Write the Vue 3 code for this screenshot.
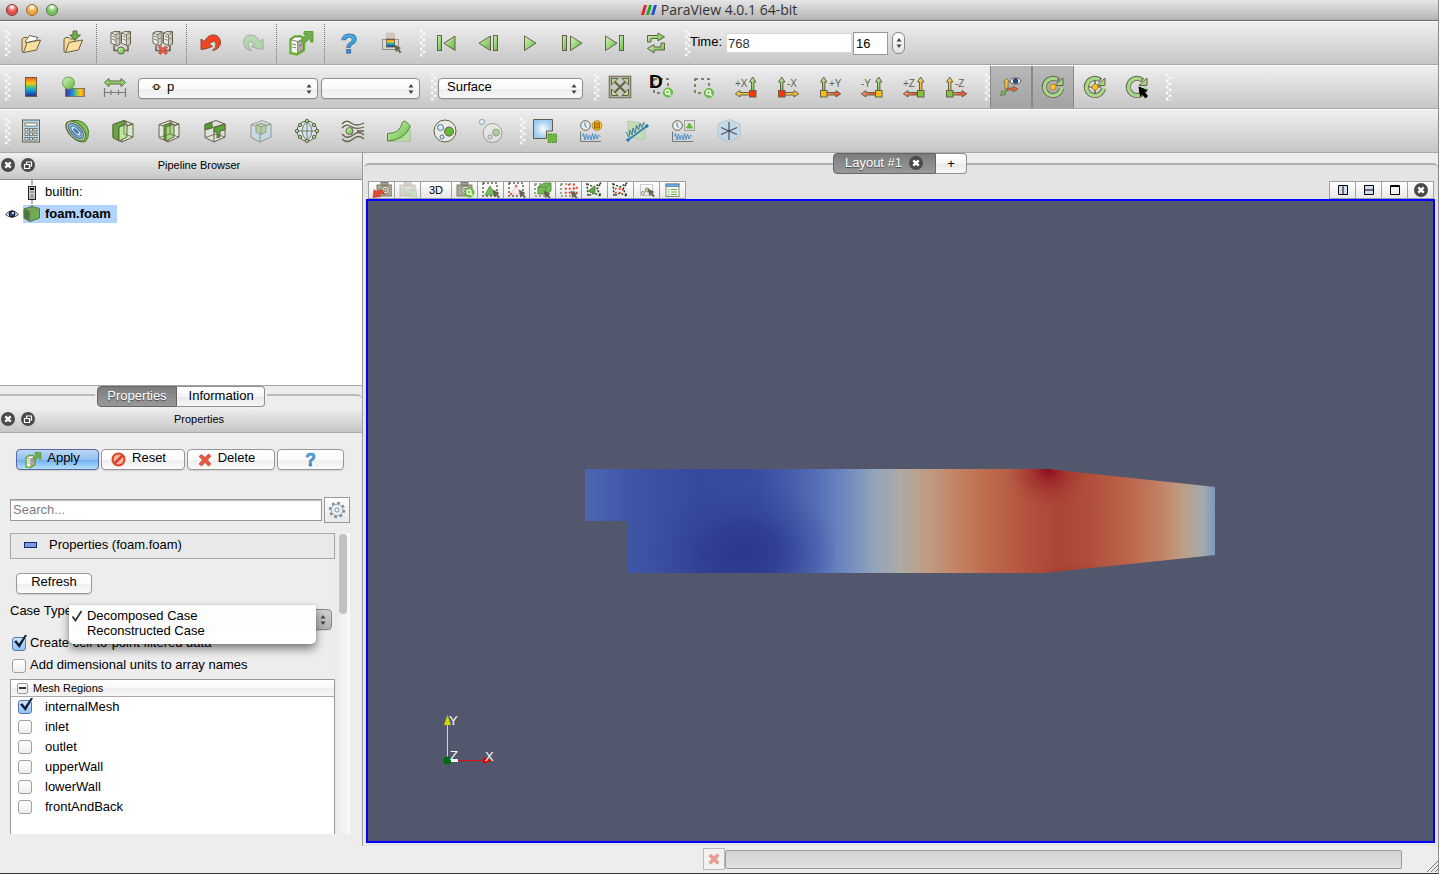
<script setup>
import { ref } from 'vue'

const K = '#646048'
const p = (d, fill = 'none', s = K, w = 1) => `<path d="${d}" fill="${fill}" stroke="${s}" stroke-width="${w}"/>`
const c = (x, y, r, fill = 'none', s = K, w = 1) => `<circle cx="${x}" cy="${y}" r="${r}" fill="${fill}" stroke="${s}" stroke-width="${w}"/>`
const r = (x, y, w, h, fill = 'none', s = K, sw = 1) => `<rect x="${x}" y="${y}" width="${w}" height="${h}" fill="${fill}" stroke="${s}" stroke-width="${sw}"/>`
const dash = (x, y, w, h, s = K, gap = '2 2') => `<rect x="${x}" y="${y}" width="${w}" height="${h}" fill="none" stroke="${s}" stroke-width="1.5" stroke-dasharray="${gap}"/>`
const t = (x, y, size, str, weight = 'normal', fill = K) => `<text x="${x}" y="${y}" font-family="Liberation Sans, sans-serif" font-size="${size}" font-weight="${weight}" fill="${fill}">${str}</text>`
const e = (rx, ry, fill, s = K) => `<ellipse cx="11" cy="12" rx="${rx}" ry="${ry}" fill="${fill}" stroke="${s}" transform="rotate(45 11 12)"/>`
const G = 'url(#g-green)', B = 'url(#g-blue)', Y = 'url(#g-yellow)', R = 'url(#g-red)', W = 'url(#g-white)', RB = 'url(#g-rainbow)', RBH = 'url(#g-rainbow-h)', HB = 'url(#g-help)'

const folder = p('M3 20.5L3 8L4.5 6.5H8L9.5 8H13L14 10', '#f6d795') + p('M4.5 21.5L8 11.5L21.5 9L17.5 19Z', '#fbdf9f') + p('M3 20.5L4.5 21.5')
const tower = (x) => p(`M${x} 2L${x + 3} .6H${x + 9}V13L${x + 6} 15L${x} 12Z`, W) + p(`M${x} 2L${x + 5} 4L${x + 9} .8M${x + 5} 4V14.5`, 'none', K, .8) + p(`M${x + 1} 5L${x + 4} 6.2M${x + 1} 8L${x + 4} 9.2M${x + 6} 8L${x + 8} 7`, 'none', K, .8)
const servers = tower(2) + tower(12.5) + p('M5 14.5V19.5H19V14.5', 'none', K, 1.5)
const box = (a, b, d) => p('M2 5.5L13 1.5L22 5V18L11 23L2 18.5Z', a) + p('M2 5.5L11 8.5L22 5L11 8.5V23', b) + (d || '')
const lens = (x, y) => c(x, y, 4.5, '#6cc644', '#5cb536') + c(x - .5, y - .5, 2, 'none', '#fff', 1.3) + p(`M${x + 1} ${y + 1}l2 2`, 'none', '#fff', 1.3)
const ring = p('M20.4 13.5A8.6 8.6 0 1 1 17.5 5.4', 'none', K, 5) + p('M20.6 12.5A8.6 8.6 0 1 1 16.5 4.7', 'none', '#a5d888', 3.2) + p('M22 3V10.5H14L16.5 8Z', '#9fd57d')
const axis = (label, right, sq, up, side) => {
  const x = right ? 15.5 : 2.5
  const m = x + 3.2
  return p(`M${m - 1.2} 16V7H${m - 3.2}L${m} 2L${m + 3.2} 7H${m + 1.2}V16Z`, up) +
    (right ? p('M16 17.5H6V15.5L1.3 18.8L6 22V20H16Z', side) : p('M8 17.5H18V15.5L22.7 18.8L18 22V20H8Z', side)) +
    r(x, 15.5, 6.5, 6.5, sq) + t(right ? 1 : 11, 12, 10, label)
}
const clock = c(6.5, 6.5, 4.8, '#e9eef2') + p('M6 3.5V7L8 8.5', 'none', '#3a7cb5')
const wave = p('M1.5 12.5V22.5H22', 'none', '#7b7a70') + p('M3 17.5L4.5 14.5L6 21L7.5 15L9 20.5L10.5 16L12 21L13.5 14.5L15 20.5L16.5 15L18 20L19.5 16L21 17.5', 'none', '#4a92cf')
const cam = r(5, 3, 15, 11, '#aaa896', '#7f7d69') + r(9, .5, 7, 2.5, '#aaa896', '#7f7d69') + c(13.5, 8, 3.8, '#efefe8', '#7f7d69') + c(13.5, 8, 1.8, '#c9c8bd', '#7f7d69')
const pointer = (x, y) => p(`M${x} ${y}l6 3l-2 .8l2.500 3.200l-1.200 1l-2.300 -3.200l-1.300 2Z`, '#66634f', '#55523f', .5)

const icons = {
  open: folder + p('M6 11L10.5 4.5L19 6.5L17 9.5L8 11.5Z', '#fff'),
  save: folder + p('M12 0h4v4h3.5L14 9L8.800 4H12Z', '#62b83d'),
  connect: servers + c(12, 19.5, 3.5, G),
  disconnect: servers + p('M7.500 16.500l2-1.500l2.500 2.500l2.500-2.500l2 1.500l-2.500 2.700l2.500 2.800l-2 1.500l-2.500-2.500l-2.500 2.500l-2-1.500l2.500-2.800Z', '#ed5b49', '#b5483a', .8),
  undo: p('M2 18.500V8L5.500 10.500Q9 3 16 4Q21.500 5.500 21.500 12Q20.500 18.500 13.500 19.500Q18 16.500 17 12Q15 8.500 10 13L13.500 15.500Q8 18 2 18.500Z', '#f2451f', '#84503c'),
  redo: `<g opacity=".5">${p('M22 18.500V8L18.500 10.500Q15 3 8 4Q2.500 5.500 2.500 12Q3.500 18.500 10.500 19.500Q6 16.500 7 12Q9 8.500 14 13L10.500 15.500Q16 18 22 18.500Z', '#8fd585', '#5f8660')}</g>`,
  server: p('M1.500 8.500L6 5.500H12L15 7.500V19L8 23.500L1.500 22Z', '#f6f6f3', '#66b52c', 2.400) + p('M8.500 10.500L14.500 8V18.500L8.500 22.500Z', '#aeac9f', K, .6) + p('M2 8.700L8.500 10.500L14.500 8L12 6H6Z', '#fff', K, .8) + p('M3.500 13l3.500 .8M3.500 16l3.500 .8M10.500 15l2.500-1.500', 'none', K, .8) + p('M11.500 9L18 3.500H15V.5H24V11H21.500V7L14.500 13Z', '#72a856', '#5aa52b'),
  help: `<text x="3.500" y="22" font-family="Liberation Sans, sans-serif" font-size="28" font-weight="bold" fill="${HB}" stroke="#3d6d93" stroke-width=".8">?</text>`,
  pick: r(7.500, 2, 8, 5.500, '#d9c3b5', '#bbb', .6) + r(7.500, 8, 8, 8, RB, K, .8) + `<rect x="3.500" y="8.500" width="16" height="10" fill="none" stroke="#4b4a40" stroke-dasharray="1 1"/>` + pointer(15.500, 14),
  first: r(3.500, 4.500, 4, 15, G) + p('M21 5V19.500L10 12.200Z', G),
  prev: r(17.500, 4.500, 4, 15, G) + p('M14.500 5V19.500L3 12.200Z', G),
  play: p('M6.500 5V19.500L18 12.200Z', G),
  next: r(2.500, 4.500, 4, 15, G) + p('M10.500 5V19.500L22 12.200Z', G),
  last: r(17.500, 4.500, 4, 15, G) + p('M3.500 5V19.500L15 12.200Z', G),
  loop: p('M3.500 11V4.500H14V2L20.500 6L14 10V7.500H7V11Z', G) + p('M20.500 12V19H10V22L3.500 17.500L10 13.500V16H17V12Z', G),
  colormap: r(6.500, 2.500, 11, 19, RB, '#6b5b4a'),
  editmap: r(4.500, 13.500, 19, 8, RBH, '#706a5a', .8) + c(7.500, 8, 6, G, '#6f9d5c'),
  rescale: p('M1.500 7.500L6 3.500V6H18V3.500L22.500 7.500L18 11.500V9H6V11.500Z', '#8ed968') + p('M1.500 13V22M22.500 13V22M1.500 17.500H22.500M8 15V20M15.500 15V20', 'none', '#7b7a70', 1.2),
  calc: r(3.500, 1, 17, 22, '#b9d9f0') + r(6, 4, 12, 3, '#fff', K, .8) + [6, 10.5, 15].map(x => [9.5, 14, 18.5].map(y => r(x, y, 3, 2.500, '#eef5fa', K, .8)).join('')).join(''),
  contour: p('M1.500 3.500Q6 .5 13 1.500Q22 3.500 23.500 12Q24 19 20.500 22.500Q14 25 6 17Q-1 9 1.500 3.500Z', '#7cc455', '#4e7a35') + e(12, 7, '#b4d88e') + e(9.500, 5, '#8dbbe0', '#446b8e') + e(6.500, 3, '#c6e2f5', '#446b8e') + e(3, 1, '#4f91c6', '#446b8e'),
  clip: box('#d8e8cc', 'none', p('M2 5.500L13 1.500L16 3L8 8V22L2 18.500Z', '#62a83b') + p('M8 8L16 5V18L8 22Z', '#bce79c') + p('M13 1.500V15M13 15L22 18', 'none', K, .8)),
  slice: box('#e4e8dd', 'none', p('M7 6L15 3.500V17L7 21Z', '#62a83b') + p('M9 8L17 5V18L9 22Z', '#a6dc80') + p('M13 1.500V15L2 18.500M13 15L22 18', 'none', K, .8)),
  threshold: box('#dfe2da', 'none', p('M2 5.500L9 3V9L2 11Z', '#529c34') + p('M11 8.500L22 5V11L17 12V18L14 19V13H11Z', '#56a833') + p('M13 15L2 18.500M13 15L22 18', 'none', K, .8)),
  subset: `<g opacity=".55">${box('#bcdcf2', 'none') + p('M7 6L12 4.500L17 6V13L12 15.500L7 13Z', '#8fca74') + p('M7 6L12 8L17 6M12 8V15')}</g>`,
  glyph: c(12, 12, 10, '#d5e6f2') + p('M2 12H22M12 2V22M12 2Q2 12 12 22M12 2Q22 12 12 22', 'none', K, .8) + [[12, 2], [12, 22], [2, 12], [22, 12], [5, 6], [19, 6], [5, 18], [19, 18]].map(a => c(a[0], a[1], 1.700, '#9ed97c')).join(''),
  stream: p('M1 5Q5 0 10 4T23 4M1 9Q5 4 10 7.500T23 8M1 15Q6 21 12 16T23 16M1 20Q6 25 12 20T23 20M16 12H23', 'none', K, 1.3) + c(8.500, 12, 3.500, G),
  warp: p('M.5 15V22.500H23.500V11Z', '#b7d9a4', '#99b58c', .6) + p('M.5 22V14.500Q13 15 15.500 3L18 2L23.500 7Q18 21 .5 22Z', G, '#56823f'),
  group: c(12, 12, 11, '#e9eae4') + c(16, 12.500, 4.500, '#65ba38') + c(7.500, 8.500, 3, '#d6eafa', '#4f7590') + c(9, 18, 2, '#d6eafa', '#4f7590'),
  extract: `<g opacity=".5">${c(13.5, 14, 9.500, '#eee') + c(17, 13.500, 3.500, '#7cc75a') + c(11, 18, 2, '#d6eafa') + c(3, 3, 2.700, '#d6eafa', '#4f7590')}</g>`,
  fit: r(1.500, 1.500, 21, 21, '#c9cabf', '#7d7b66', 1.6) + p('M5 5L19 19M19 5L5 19', 'none', K, 2) + p('M3.500 3.500H10L3.500 10ZM20.500 3.500V10L14 3.500ZM3.500 20.500V14L10 20.500ZM20.500 20.500H14L20.500 14Z', '#b9dc98'),
  zoomdata: dash(4, 4, 14, 14, K, '3 3') + t(-1, 13, 19, 'D', 'bold', '#000') + lens(18, 17.500),
  zoombox: dash(3, 4, 14, 14, K, '3 3') + lens(17, 18),
  px: axis('+X', true, '#ff3408', G, Y), mx: axis('-X', false, '#ff3408', G, Y),
  py: axis('+Y', false, '#f9bd1b', G, R), my: axis('-Y', true, '#f9bd1b', G, R),
  pz: axis('+Z', true, '#7fc63b', Y, R), mz: axis('-Z', false, '#7fc63b', Y, R),
  orient: p('M6 14V7H4.500L7.500 3.500L10.500 7H9V14Z', '#f5c437', K, .7) + p('M8 13H14V11L19 14L14 17V15H8Z', '#f05a35', K, .7) + p('M8 14L4.500 17L3 15.500L1.500 20.500L6.500 19.500L5.500 18L9 15.500Z', '#79c152', K, .7) + `<ellipse cx="16.500" cy="6" rx="5.500" ry="3" fill="#eef3f8" stroke="#555a66"/>` + c(16.500, 6, 2.200, '#27528e', '#182a4c'),
  center: ring + c(12, 12, 3, '#fcbf24', '#a5812c', .8),
  resetc: ring + c(12, 12, 3, '#fcbf24', '#a5812c', .8) + p('M12 5.500V9M12 15V18.500M5.500 12H9M15 12H18.500', 'none', '#4e4b39', 1.200),
  pickc: ring + p('M14 12L22 15.500L19 17L22.500 21L20.500 23L17 19L15.500 21.500Z', '#000', '#000'),
  block: p('M.5 .5H19.500V12H13.500V19.500H.5Z', B) + `<rect x="15" y="15" width="8.500" height="8.500" fill="#6dbb3c" stroke="#4e7b2d" stroke-dasharray="1.500 1"/>`,
  plottime: clock + c(18, 6.500, 4.800, '#ffc51d', '#a68a31') + r(15.500, 4, 5, 5, '#d88d0c', '#845c14', .8) + wave,
  plotline: p('M3 2L21 5L19 21L3 18Z', '#c3dcb6', '#a5c096', .6) + p('M3 21L22 7', 'none', '#2f7fc0', 1.600) + p('M1 13L4 18L5 11L7 16L8 9L10 14L11.500 6L13.500 11L15 4.500L17 8.500L19 3', 'none', '#3c779f') + c(3, 21, 1.200, '#2173bd', '#2173bd') + c(22, 7, 1.200, '#2173bd', '#2173bd'),
  plotsel: clock + `<rect x="13.500" y="1.500" width="10" height="10" fill="none" stroke="#646048" stroke-dasharray="1 1"/>` + p('M18.500 4L21.500 9H15.500Z', '#62b93c', '#62b93c') + wave,
  probe: `<g opacity=".75">${p('M12 .5L23 5V17L12 23.500L1 17V5Z', '#bcd9ee', '#a6bfd0')}</g>` + p('M12 3V21M4 8.500L20 15.500M20 8.500L4 15.500', 'none', '#4c5258', 1.200),
}
const small = {
  camundo: cam + p('M1 15.500L2 7.500L4.500 9.500Q11 5 12.500 12.500Q9.500 10.500 7 12.500L9 14.500Z', '#e8482c', '#a0432f', .6),
  camredo: `<g opacity=".4"><g transform="translate(-3 0)">${cam}</g>${p('M19 15.500L18 7.500L15.500 9.500Q9 5 7.500 12.500Q10.500 10.500 13 12.500L11 14.500Z', '#88cf7b', '#5f8660', .6)}</g>`,
  camzoom: `<g transform="translate(-3 0)">${cam}</g>` + lens(14.5, 10.5),
  selcell: dash(2, 1, 14, 13) + p('M9 4L14 13H4Z', '#79bd5c', '#5c9b42') + pointer(12, 8),
  selpt: dash(2, 1, 14, 13) + p('M9 4L14 12H4Z', 'none', '#f0a797', .6) + c(9, 4, .8, '#f44', '#f44') + c(4, 12, .8, '#f44', '#f44') + pointer(12, 8),
  frcell: dash(2, 2, 13, 12, '#8b8977') + p('M5 5L11 1H18V9L13 12H5Z', '#78b95b', '#56963a') + p('M5 5H13V12M13 5L18 1', 'none', '#4b8731', .7) + pointer(11, 9),
  frpt: dash(2, 2, 13, 12, '#8b8977') + [[6, 6], [10, 6], [6, 10], [10, 10], [9, 2], [14, 2], [17, 5], [17, 10], [14, 6]].map(a => r(a[0], a[1], 1.500, 1.500, '#f0402c', '#f0402c', .5)).join('') + pointer(12, 9),
  polycell: `<path d="M2 2L9 5L16 1L12 7L16 14L9 11L3 14Z" fill="none" stroke="#24451d" stroke-width="1.500" stroke-dasharray="2 1.500"/>` + p('M3 9L10 4V12Z', '#62a548', '#5d8a4a'),
  polypt: `<path d="M2 2L9 5L16 1L12 7L16 14L9 11L3 14Z" fill="none" stroke="#24451d" stroke-width="1.500" stroke-dasharray="2 1.500"/>` + [[4, 6], [8, 6], [4, 10], [8, 10], [11, 7]].map(a => r(a[0], a[1], 1.500, 1.500, '#f0402c', '#f0402c', .5)).join(''),
  selblock: `<rect x="3.500" y="2.500" width="12" height="11" fill="none" stroke="#999" stroke-dasharray="1 1"/>` + c(10, 8, 2, '#bcd7aa', '#8b8977') + c(6, 11, 1.500, '#fff', '#8b8977') + pointer(11, 7),
  inspect: r(3, 2, 13, 12.500, '#f5faef', '#7f9167') + r(3, 2, 13, 2.500, '#6fa9dd', '#4779ae', .7) + p('M5 7.500H6.500M8 7.500H14M5 10H6.500M8 10H14M5 12.500H6.500M8 12.500H14', 'none', '#6cac4c', 1.200),
}

const fileTools = [['open', 'save'], ['connect', 'disconnect'], ['undo', 'redo'], ['server'], ['help', 'pick']]
const vcr = ['first', 'prev', 'play', 'next', 'last', 'loop']
const colorTools = ['colormap', 'editmap', 'rescale']
const cameraTools = ['fit', 'zoomdata', 'zoombox', 'px', 'mx', 'py', 'my', 'pz', 'mz']
const centerTools = ['orient', 'center', 'resetc', 'pickc']
const filters = ['calc', 'contour', 'clip', 'slice', 'threshold', 'subset', 'glyph', 'stream', 'warp', 'group', 'extract']
const dataTools = ['block', 'plottime', 'plotline', 'plotsel', 'probe']
const viewTools = ['camundo', 'camredo', '3D', 'camzoom', 'selcell', 'selpt', 'frcell', 'frpt', 'polycell', 'polypt', 'selblock', 'inspect']

const regions = ref([
  { name: 'internalMesh', on: true }, { name: 'inlet', on: false }, { name: 'outlet', on: false },
  { name: 'upperWall', on: false }, { name: 'lowerWall', on: false }, { name: 'frontAndBack', on: false },
])
const pressed = ref(['orient', 'center'])
const caseType = ref('Decomposed Case')
const caseTypes = ['Decomposed Case', 'Reconstructed Case']
const filtered = ref(true)
const units = ref(false)
const time = ref('768')
const step = ref('16')
const search = ref('')
</script>

<template>
  <div class="window">
    <svg class="defs" width="0" height="0" aria-hidden="true">
      <defs>
        <linearGradient id="g-green" x2="1" y2="1"><stop offset="0" stop-color="#d6f5c0" /><stop offset="1" stop-color="#5fb835" /></linearGradient>
        <linearGradient id="g-yellow" x2="1" y2="1"><stop offset="0" stop-color="#ffdf70" /><stop offset="1" stop-color="#f0ac10" /></linearGradient>
        <linearGradient id="g-red" x2="1"><stop offset="0" stop-color="#ff9368" /><stop offset="1" stop-color="#ee4420" /></linearGradient>
        <linearGradient id="g-white" x2="1"><stop offset="0" stop-color="#fff" /><stop offset="1" stop-color="#bbb9ad" /></linearGradient>
        <radialGradient id="g-blue"><stop offset="0" stop-color="#f5fbff" /><stop offset="1" stop-color="#9cc9ee" /></radialGradient>
        <linearGradient id="g-help" x2="0" y2="1"><stop offset="0" stop-color="#58bdf8" /><stop offset="1" stop-color="#1683dc" /></linearGradient>
        <linearGradient id="g-rainbow" x2="0" y2="1"><stop offset="0" stop-color="#f25a2b" /><stop offset=".3" stop-color="#ffc80a" /><stop offset=".5" stop-color="#4fc27a" /><stop offset=".7" stop-color="#0a97e0" /><stop offset="1" stop-color="#2e2378" /></linearGradient>
        <linearGradient id="g-rainbow-h" x2="1"><stop offset="0" stop-color="#4b2b8e" /><stop offset=".35" stop-color="#148ad6" /><stop offset=".6" stop-color="#8fc65a" /><stop offset=".8" stop-color="#ffc80a" /><stop offset="1" stop-color="#f2703b" /></linearGradient>
        <symbol id="s-close" viewBox="0 0 14 14"><circle cx="7" cy="7" r="7" fill="#4a4a4a" /><path d="M4.300 4.300L9.700 9.700M9.700 4.300L4.300 9.700" stroke="#fff" stroke-width="2.400" /></symbol>
        <symbol id="s-float" viewBox="0 0 14 14"><circle cx="7" cy="7" r="7" fill="#4a4a4a" /><path d="M5.500 6V4H10.500V8H9M3.500 6.500H8.500V10.500H3.500Z" fill="none" stroke="#fff" stroke-width="1.200" /></symbol>
        <symbol id="s-cross" viewBox="0 0 14 14"><path d="M1 3.500L3.500 1.500L7 4.500L10.500 1L13 3L9.500 7L13 11L10.500 13L7 9.500L3.500 13L1 11L4.500 7Z" fill="#f0583e" stroke="#a5493b" stroke-width=".7" /></symbol>
        <symbol id="s-arrows" viewBox="0 0 8 12"><path d="M1.500 4.500L4 1L6.500 4.500ZM1.500 7.500L4 11L6.500 7.500Z" fill="#444" /></symbol>
      </defs>
    </svg>

    <header class="titlebar">
      <div class="lights">
        <button class="light red" aria-label="Close"></button>
        <button class="light amber" aria-label="Minimize"></button>
        <button class="light green" aria-label="Zoom"></button>
      </div>
      <h1>
        <svg width="16" height="10" viewBox="0 0 16 10"><path d="M3 0H6L3 10H0Z" fill="#e8202c" /><path d="M8 0H11L8 10H5Z" fill="#1ea52b" /><path d="M13 0H16L13 10H10Z" fill="#1d4fd0" /></svg>
        <span>ParaView 4.0.1 64-bit</span>
      </h1>
    </header>

    <div class="toolbar">
      <i class="grip"></i>
      <template v-for="(group, gi) in fileTools" :key="gi">
        <i v-if="gi" class="sep"></i>
        <button v-for="n in group" :key="n" class="tool" :aria-label="n"><svg width="24" height="24" viewBox="0 0 24 24" v-html="icons[n]"></svg></button>
      </template>
      <i class="grip spaced"></i>
      <button v-for="n in vcr" :key="n" class="tool" :aria-label="n"><svg width="24" height="24" viewBox="0 0 24 24" v-html="icons[n]"></svg></button>
      <i class="grip spaced"></i>
      <label class="time-label" for="time">Time:</label>
      <input id="time" v-model="time" class="time">
      <input v-model="step" class="step" aria-label="Time step">
      <button class="stepper" aria-label="Change step"><svg width="8" height="16" viewBox="0 0 8 12"><use href="#s-arrows" /></svg></button>
    </div>

    <div class="toolbar">
      <i class="grip"></i>
      <button v-for="n in colorTools" :key="n" class="tool" :aria-label="n"><svg width="24" height="24" viewBox="0 0 24 24" v-html="icons[n]"></svg></button>
      <div class="combo array">
        <svg class="dot" width="9" height="8" viewBox="0 0 9 8"><circle cx="4.500" cy="4" r="2.500" fill="#ffdcae" stroke="#2b1b0b" stroke-width="1.200" /><path d="M0 4H2M7 4H9" stroke="#7a5a38" /></svg>
        <select aria-label="Color array"><option>p</option></select>
        <svg class="arrows" width="8" height="12"><use href="#s-arrows" /></svg>
      </div>
      <div class="combo component">
        <select aria-label="Component"><option></option></select>
        <svg class="arrows" width="8" height="12"><use href="#s-arrows" /></svg>
      </div>
      <i class="grip wide"></i>
      <div class="combo repr">
        <select aria-label="Representation"><option>Surface</option></select>
        <svg class="arrows" width="8" height="12"><use href="#s-arrows" /></svg>
      </div>
      <i class="grip far"></i>
      <button v-for="n in cameraTools" :key="n" class="tool" :aria-label="n"><svg width="24" height="24" viewBox="0 0 24 24" v-html="icons[n]"></svg></button>
      <i class="grip spaced"></i>
      <button v-for="n in centerTools" :key="n" class="tool" :class="{ pressed: pressed.includes(n) }" :aria-label="n"><svg width="24" height="24" viewBox="0 0 24 24" v-html="icons[n]"></svg></button>
      <i class="grip spaced"></i>
    </div>

    <div class="toolbar filters">
      <i class="grip"></i>
      <button v-for="n in filters" :key="n" class="tool" :aria-label="n"><svg width="24" height="24" viewBox="0 0 24 24" v-html="icons[n]"></svg></button>
      <i class="grip spaced"></i>
      <button v-for="n in dataTools" :key="n" class="tool" :aria-label="n"><svg width="24" height="24" viewBox="0 0 24 24" v-html="icons[n]"></svg></button>
    </div>

    <main class="body">
      <aside class="left">
        <div class="dock-title">
          <button class="round" aria-label="Close"><svg width="14" height="14"><use href="#s-close" /></svg></button>
          <button class="round" aria-label="Float"><svg width="14" height="14"><use href="#s-float" /></svg></button>
          <h2>Pipeline Browser</h2>
        </div>
        <ul class="pipeline">
          <li>
            <span class="eye"></span>
            <svg class="node" width="18" height="24" viewBox="0 0 18 24"><path d="M9 0V5M9 20V24" stroke="#666" /><rect x="5.500" y="6.500" width="7" height="13" fill="#ccc" stroke="#222" /><path d="M7 9H11" stroke="#000" stroke-width="2" /><path d="M7 12H11M8 15H10V18H8Z" stroke="#666" stroke-width=".8" fill="#eee" /></svg>
            <span>builtin:</span>
          </li>
          <li>
            <svg class="eye" width="14" height="10" viewBox="0 0 14 10"><path d="M.5 5.500Q7 -2 13.500 5.500Q7 11 .5 5.500Z" fill="#e8eef3" stroke="#444" /><circle cx="7" cy="5" r="3" fill="#234b74" stroke="#111" /><circle cx="8" cy="4" r="1" fill="#fff" /></svg>
            <span class="chosen">
              <svg width="18" height="18" viewBox="0 0 18 18"><path d="M9 0V3" stroke="#666" /><path d="M1 4L9 1.500L16.500 3.500V13L7 16.500L1 13Z" fill="#6fae52" stroke="#527048" /><path d="M1 4L7 6V16.500L1 13Z" fill="#4d7a40" /><path d="M7 6L16.500 3.500M7 6V16.500" stroke="#8c8a5c" /></svg>
              <b>foam.foam</b>
            </span>
          </li>
        </ul>
        <div class="tabs dock-tabs">
          <button class="tab active">Properties</button><button class="tab">Information</button>
        </div>
        <div class="dock-title lower">
          <button class="round" aria-label="Close"><svg width="14" height="14"><use href="#s-close" /></svg></button>
          <button class="round" aria-label="Float"><svg width="14" height="14"><use href="#s-float" /></svg></button>
          <h2>Properties</h2>
        </div>
        <section class="props">
          <div class="actions">
            <button class="push apply"><svg width="16" height="16" viewBox="0 0 24 24" v-html="icons.server"></svg>Apply</button>
            <button class="push reset"><svg width="15" height="15" viewBox="0 0 15 15"><circle cx="7.500" cy="7.500" r="6" fill="#f7b6a4" stroke="#d94427" stroke-width="2" /><path d="M3.500 11.500L11.500 3.500" stroke="#d94427" stroke-width="2.500" /></svg>Reset</button>
            <button class="push delete"><svg width="14" height="14"><use href="#s-cross" /></svg>Delete</button>
            <button class="push query" aria-label="Help"><svg width="15" height="15" viewBox="0 0 24 24" v-html="icons.help"></svg></button>
          </div>
          <div class="search-row">
            <input v-model="search" class="search" placeholder="Search..." aria-label="Search properties">
            <button class="gear" aria-label="Advanced">
              <svg width="18" height="18" viewBox="0 0 18 18"><circle cx="9" cy="9" r="7" fill="none" stroke="#7f8c97" stroke-width="2.400" stroke-dasharray="2.700 2.800" /><circle cx="9" cy="9" r="5.800" fill="#e6edf3" stroke="#8996a1" stroke-width=".8" /><circle cx="9" cy="9" r="2" fill="#fafafa" stroke="#8996a1" /></svg>
            </button>
          </div>
          <div class="scroll">
            <div class="form">
              <button class="section"><i></i>Properties (foam.foam)</button>
              <button class="push refresh">Refresh</button>
              <div class="case">
                <label for="case">Case Type</label>
                <div class="combo case-combo">
                  <select id="case" v-model="caseType"><option v-for="o in caseTypes" :key="o">{{ o }}</option></select>
                  <svg class="arrows" width="8" height="12"><use href="#s-arrows" /></svg>
                  <ul class="menu" role="listbox" aria-label="Case Type">
                    <li v-for="o in caseTypes" :key="o" role="option" :aria-selected="o === caseType">
                      <svg width="12" height="12" viewBox="0 0 12 12"><path v-if="o === caseType" d="M1.500 6.500L4.500 10.500L10.500 1" fill="none" stroke="#333" stroke-width="1.800" /></svg>{{ o }}
                    </li>
                  </ul>
                </div>
              </div>
              <label class="check"><input v-model="filtered" type="checkbox">Create cell-to-point filtered data</label>
              <label class="check"><input v-model="units" type="checkbox">Add dimensional units to array names</label>
              <div class="regions">
                <div class="regions-head"><button class="collapse" aria-label="Collapse"></button>Mesh Regions</div>
                <label v-for="m in regions" :key="m.name" class="region"><input v-model="m.on" type="checkbox">{{ m.name }}</label>
              </div>
            </div>
            <div class="track"><i></i></div>
          </div>
        </section>
      </aside>

      <section class="right">
        <div class="tabs view-tabs">
          <button class="tab active">Layout #1 <svg width="14" height="14"><use href="#s-close" /></svg></button><button class="tab plus">+</button>
        </div>
        <div class="pane">
          <div class="view-tools">
            <button v-for="n in viewTools" :key="n" :class="{ text: n === '3D' }" :aria-label="n"><template v-if="n === '3D'">3D</template><svg v-else width="20" height="16" viewBox="0 0 20 16" v-html="small[n]"></svg></button>
            <span class="fill"></span>
            <button aria-label="Split horizontal"><svg width="10" height="10" viewBox="0 0 10 10"><path d="M.5 .5H9.500V9.500H.5ZM5 0V10" fill="#cfdcf5" stroke="#000" /></svg></button>
            <button aria-label="Split vertical"><svg width="10" height="10" viewBox="0 0 10 10"><path d="M.5 .5H9.500V9.500H.5ZM0 5H10" fill="#cfdcf5" stroke="#000" /></svg></button>
            <button aria-label="Maximize"><svg width="10" height="10" viewBox="0 0 10 10"><path d="M.5 .5H9.500V9.500H.5ZM0 1.500H10" fill="#f4f4f4" stroke="#000" /></svg></button>
            <button aria-label="Close view"><svg width="14" height="14"><use href="#s-close" /></svg></button>
          </div>
          <div class="view">
            <svg class="mesh" viewBox="0 0 631 104" shape-rendering="crispEdges">
              <defs>
                <linearGradient id="field" gradientUnits="userSpaceOnUse" x1="0" x2="631">
                  <stop offset="0" stop-color="#4c67b2" /><stop offset=".08" stop-color="#3e54a5" /><stop offset=".18" stop-color="#37499c" /><stop offset=".27" stop-color="#394c9f" /><stop offset=".32" stop-color="#445ba8" /><stop offset=".37" stop-color="#5570b6" /><stop offset=".42" stop-color="#728dbf" /><stop offset=".46" stop-color="#93a5b9" /><stop offset=".5" stop-color="#acaba4" /><stop offset=".54" stop-color="#bf9d85" /><stop offset=".59" stop-color="#c28364" /><stop offset=".64" stop-color="#bd6a4c" /><stop offset=".69" stop-color="#b45640" /><stop offset=".75" stop-color="#ab4636" /><stop offset=".8" stop-color="#b04f3b" /><stop offset=".86" stop-color="#bb644a" /><stop offset=".91" stop-color="#c27f62" /><stop offset=".95" stop-color="#bba086" /><stop offset=".98" stop-color="#a4aaad" /><stop offset="1" stop-color="#7d98c4" />
                </linearGradient>
                <radialGradient id="low"><stop offset="0" stop-color="#2d378b" /><stop offset=".35" stop-color="#2e3a8e" stop-opacity=".85" /><stop offset=".65" stop-color="#324095" stop-opacity=".4" /><stop offset="1" stop-color="#34439a" stop-opacity="0" /></radialGradient>
                <radialGradient id="high"><stop offset="0" stop-color="#8a0820" /><stop offset=".3" stop-color="#981d26" stop-opacity=".7" /><stop offset="1" stop-color="#a8402f" stop-opacity="0" /></radialGradient>
                <clipPath id="outline"><path d="M0 0H463L631 18V86L460 104H42V52H0Z" /></clipPath>
              </defs>
              <g clip-path="url(#outline)">
                <rect width="631" height="104" fill="url(#field)" />
                <ellipse cx="158" cy="84" rx="96" ry="72" fill="url(#low)" />
                <circle cx="464" cy="0" r="42" fill="url(#high)" />
                <ellipse cx="490" cy="108" rx="55" ry="18" fill="url(#high)" opacity=".35" />
              </g>
            </svg>
            <svg class="axes" width="64" height="64" viewBox="0 0 64 64">
              <path d="M10.500 50V13" stroke="#f4f000" stroke-width="1" shape-rendering="crispEdges" /><path d="M10.500 5L14 15H7Z" fill="#d9d400" />
              <path d="M10 50.500H47" stroke="#e01010" shape-rendering="crispEdges" /><path d="M46 47L55 50.500L46 54Z" fill="#e80000" />
              <circle cx="10.500" cy="50.500" r="4" fill="#006a12" />
              <path d="M14 50.500H21" stroke="#fff" stroke-width="2" shape-rendering="crispEdges" />
              <g font-family="Liberation Sans, sans-serif" font-size="13" fill="#fff"><text x="12" y="15">Y</text><text x="13" y="50">Z</text><text x="48" y="51">X</text></g>
            </svg>
          </div>
        </div>
      </section>
    </main>

    <footer class="status">
      <button class="abort" aria-label="Abort"><svg width="12" height="12"><use href="#s-cross" /></svg></button>
      <div class="progress" role="progressbar" aria-label="Progress"></div>
      <svg class="resize" width="12" height="12" viewBox="0 0 12 12"><path d="M1 12L12 1M5 12L12 5M9 12L12 9" stroke="#777" /></svg>
    </footer>
  </div>
</template>

<style>
body { margin: 0; background: #ededed; }
</style>

<style scoped>
* { box-sizing: border-box; }
.window { min-height: 100vh; display: flex; flex-direction: column; background: #ededed; border-right: 1px solid #8a8a8a; font: 13px/16px "Liberation Sans", Arial, sans-serif; color: #000; }
.defs { position: absolute; }
button { font: inherit; color: inherit; padding: 0; margin: 0; border: 0; background: none; display: flex; align-items: center; justify-content: center; }
input, select { font: inherit; color: inherit; margin: 0; border-radius: 0; outline: 0; }
ul { list-style: none; margin: 0; padding: 0; }
h1, h2 { margin: 0; font-weight: normal; }
svg { flex: none; }

.titlebar { height: 21px; display: flex; align-items: center; background: linear-gradient(#e6e6e6, #b4b4b4); border-bottom: 1px solid #6a6a6a; }
.lights { flex: 1; display: flex; gap: 8px; padding-left: 6px; }
.light { width: 12px; height: 12px; border-radius: 50%; border: 1px solid #7a3a36; }
.red { background: radial-gradient(circle at 50% 20%, #fff 5%, #ee6a66 40%, #e0443e 70%, #ff9c96); }
.amber { border-color: #8f6430; background: radial-gradient(circle at 50% 20%, #fff 5%, #f3b75c 40%, #e99c30 70%, #ffe08a); }
.green { border-color: #4f7a3c; background: radial-gradient(circle at 50% 20%, #fff 5%, #93cf7c 40%, #6fb555 70%, #c6f5a4); }
.titlebar h1 { display: flex; align-items: center; gap: 4px; font: 14px/18px "Open Sans", "Noto Sans", sans-serif; color: #333; }
.titlebar::after { content: ""; flex: 1; margin-right: 6px; }

.toolbar { height: 44px; display: flex; align-items: center; background: linear-gradient(#efefef, #c6c6c6); border-top: 1px solid #fbfbfb; border-bottom: 1px solid #a6a6a6; }
.grip { flex: none; width: 6px; height: 28px; margin: 0 -1px 0 5px; background: radial-gradient(circle at 1px 2px, #f8f8f8 1px, transparent 2px) 0 0 / 6px 6px, radial-gradient(circle at 4px 5px, #f8f8f8 1px, transparent 2px) 0 0 / 6px 6px; }
.grip.spaced { margin: 0 -1px 0 8px; }
.grip.wide { margin: 0 1px 0 11px; }
.grip.far { margin: 0 -1px 0 11px; }
.sep { width: 0; align-self: stretch; margin: 2px 3px 1px 2px; border-left: 1px dotted #777; }
.tool { width: 42px; align-self: stretch; flex: none; }
.tool svg, .push svg { overflow: visible; }
.pressed { background: linear-gradient(#b9b9b9, #a3a3a3); border-left: 1px solid #888; border-right: 1px solid #888; }
.filters .grip:first-child { margin-right: -3px; }
.filters .tool { width: 46px; }
.filters .grip.spaced { margin: 0 -4px 0 6px; }
.time-label { margin: 0 4px 2px 0; }
.time { width: 126px; height: 20px; border: 1px solid #d8d8d8; padding: 0 1px; background: #fff; color: #333; }
.step { width: 35px; height: 23px; margin-left: 1px; border: 1px solid #999; padding: 0 2px; background: #fff; }
.stepper { width: 13px; height: 22px; margin-left: 4px; border: 1px solid #888; border-radius: 6px; background: linear-gradient(#fff, #e2e2e2); }

.combo { position: relative; height: 21px; display: flex; }
.combo select { appearance: none; width: 100%; height: 21px; padding: 0 16px 4px 8px; border: 1px solid #8d8d8d; border-radius: 4px; background: linear-gradient(#fff, #fafafa 50%, #ededed 51%, #f8f8f8); box-shadow: 0 1px 1px #9995; }
.combo .arrows { position: absolute; right: 5px; top: 5px; }
.array { width: 180px; margin: 3px 0 0 2px; }
.array select { padding-left: 28px; }
.dot { position: absolute; left: 14px; top: 5px; z-index: 1; }
.component { width: 99px; margin: 3px 0 0 3px; }
.repr { width: 145px; margin-top: 3px; }

.body { flex: 1; display: flex; }
.left { flex: none; width: 363px; display: flex; flex-direction: column; border-right: 1px solid #999; }
.dock-title { height: 27px; display: flex; align-items: center; gap: 6px; padding: 0 5px 2px 1px; background: linear-gradient(#f0f0f0, #c6c6c6); border-bottom: 1px solid #8e8e8e; font-size: 11px; }
.dock-title.lower { height: 26px; padding-bottom: 1px; border-color: #adadad; }
.dock-title h2 { flex: 1; text-align: center; font-size: 11px; }
.round { width: 14px; height: 14px; }
.pipeline { height: 206px; background: #fff; border-bottom: 1px solid #a4a4a4; }
.pipeline li { display: flex; align-items: center; height: 23px; }
.pipeline li:last-child { height: 22px; }
.pipeline .eye { width: 14px; margin: 0 4px 0 5px; }
.node { margin: 0 4px 0 0; }
.chosen { display: flex; align-items: center; gap: 4px; height: 18px; padding-right: 6px; background: #b3d4ff; }
.tabs { display: flex; justify-content: center; }
.tab { height: 21px; padding: 0 10px 2px; border: 1px solid #8e8e8e; background: linear-gradient(#fff, #f5f5f5 50%, #e8e8e8 51%, #f8f8f8); }
.tab:first-child { border-radius: 4px 0 0 4px; }
.tab:last-child { border-left: 0; border-radius: 0 4px 4px 0; padding-left: 12px; }
.tab.active { color: #fff; background: linear-gradient(#7c7c7c, #9a9a9a); border-color: #666; text-shadow: 0 1px 1px #444; }
.dock-tabs .active { padding: 0 9px 2px; }
.dock-tabs::before, .dock-tabs::after { content: ""; flex: 1; height: 11px; align-self: flex-end; border-top: 2px solid #bbb; margin: 0 2px 0 0; }
.dock-tabs::after { margin: 0 0 0 2px; border-top-right-radius: 5px; }

.props { flex: 1; display: flex; flex-direction: column; padding: 16px 12px 12px 10px; }
.actions { display: flex; gap: 2px; padding: 0 6px; }
.push { height: 21px; padding-bottom: 3px; border: 1px solid #989898; border-radius: 4px; background: linear-gradient(#fff, #fbfbfb 50%, #eee 51%, #fafafa); gap: 6px; box-shadow: 0 1px 1px #aaa6; }
.push svg { margin-top: 3px; }
.apply { width: 83px; padding-right: 10px; border-color: #5b66a5; background: linear-gradient(#bcd7f6, #92c1f1 50%, #6badee 51%, #b5e0fb); }
.reset { width: 84px; padding-right: 9px; }
.delete { width: 88px; padding-right: 9px; }
.query { width: 67px; }
.search-row { display: flex; align-items: center; gap: 2px; margin-top: 27px; }
.search { flex: 1; min-width: 0; height: 22px; padding: 0 2px 2px; border: 1px solid #999; box-shadow: inset 0 1px 1px #bbb; background: #fff; }
.search::placeholder { color: #7d7d7d; opacity: 1; }
.gear { width: 26px; height: 26px; border: 1px solid #999; background: linear-gradient(#fff, #e8e8e8); }
.scroll { flex: 1; display: flex; margin-top: 10px; }
.form { flex: 1; display: flex; flex-direction: column; }
.section { height: 26px; justify-content: flex-start; gap: 12px; padding: 0 0 2px 13px; border: 1px solid #a8a8a8; background: #e9e9e9; }
.section i { width: 13px; height: 6px; background: #7f9be0; border: 1px solid #16246c; }
.refresh { width: 76px; margin: 14px 0 0 6px; flex: none; }
.case { display: flex; height: 38px; padding: 9px 3px 0 0; }
.case-combo { flex: 1; margin-top: 6px; }
.case-combo select { background: linear-gradient(#d0d0d0, #b2b2b2); border-color: #888; }
.menu { position: absolute; z-index: 2; left: -3px; right: 16px; top: -4px; padding: 3px 0 6px; height: 39px; background: #fffffff8; border-radius: 0 0 5px 5px; box-shadow: 0 5px 10px #0007, 0 0 1px #0008; line-height: 15px; }
.menu li { display: flex; align-items: center; gap: 4px; padding-left: 2px; }
.check { height: 22px; display: flex; align-items: center; gap: 4px; padding: 0 0 0 2px; }
input[type="checkbox"] { appearance: none; position: relative; flex: none; width: 14px; height: 14px; margin-top: 2px; border: 1px solid #a0a0a0; border-radius: 3px; background: linear-gradient(#fff, #eee); }
input[type="checkbox"]:checked { border-color: #5774a8; background: linear-gradient(#d3e6fa, #8fc4f3); }
input[type="checkbox"]:checked::after { content: ""; position: absolute; left: 1px; top: -3px; width: 13px; height: 13px; background: #0c1c38; clip-path: polygon(0 50%, 18% 40%, 38% 68%, 84% 0, 100% 0, 42% 100%); }
.regions { flex: 1; margin-top: 3px; background: #fff; border: 1px solid #999; border-bottom: 0; }
.regions-head { display: flex; align-items: center; gap: 5px; height: 17px; padding-left: 6px; font-size: 11px; border-bottom: 1px solid #aaa; background: linear-gradient(#fff, #f8f8f8 50%, #ededed 51%, #f6f6f6); }
.collapse { width: 11px; height: 11px; border: 1px solid #999; border-radius: 2px; }
.collapse::after { content: ""; width: 7px; height: 2px; background: #333; }
.region { height: 20px; display: flex; align-items: center; gap: 13px; padding-left: 7px; }
.region input[type="checkbox"] { margin-top: 0; }
.track { width: 15px; padding: 1px 3px; background: linear-gradient(90deg, #e9e9e9, #fafafa); }
.track i { display: block; height: 80px; width: 8px; margin-left: 1px; border-radius: 4px; background: #c1c1c1; }

.right { flex: 1; min-width: 0; display: flex; flex-direction: column; padding-left: 1px; }
.view-tabs { height: 21px; position: relative; z-index: 1; margin-right: 2px; }
.view-tabs .active { gap: 7px; padding: 0 12px 2px 11px; }
.view-tabs .plus { width: 31px; padding: 0; }
.pane { flex: 1; display: flex; flex-direction: column; margin-top: -11px; padding: 16px 3px 3px 2px; border-top: 2px solid #b0b0b0; border-radius: 5px 5px 0 0; background: #e4e4e4; }
.view-tools { display: flex; height: 18px; padding: 0 2px; }
.view-tools button { width: 27px; height: 18px; margin-right: -1px; border: 1px solid #a0a0a0; background: linear-gradient(#fff, #e8e8e8); overflow: hidden; }
.view-tools .text { width: 32px; font-size: 11px; }
.fill { flex: 1; }
.view { flex: 1; position: relative; display: grid; place-items: center; background: #52576e; border: 2px solid #0000fd; }
.mesh { width: 59.200%; }
.axes { position: absolute; left: 69px; bottom: 67px; }

.status { height: 28px; display: flex; align-items: center; padding: 0 0 1px 703px; border-bottom: 1px solid #333; }
.abort { width: 22px; height: 22px; border: 1px solid #bbb; background: #f2f2f2; }
.abort svg { opacity: .55; }
.progress { flex: 1; height: 19px; border: 1px solid #9a9a9a; border-radius: 2px; background: linear-gradient(#d2d2d2, #e2e2e2); }
.resize { margin: 0 0 0 24px; align-self: flex-end; }
</style>
